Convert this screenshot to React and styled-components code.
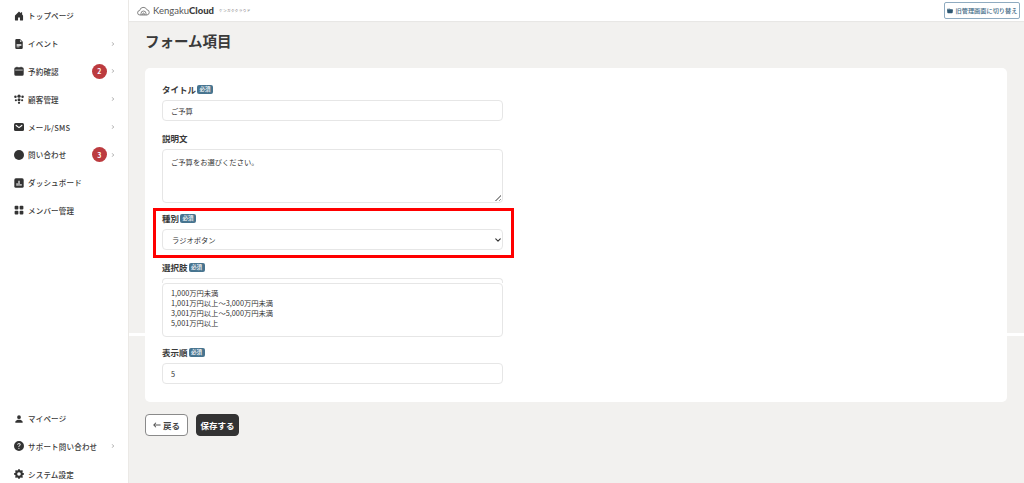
import styled, { createGlobalStyle } from 'styled-components';
import {
  BsHouseDoorFill,
  BsFileEarmarkTextFill,
  BsCircleFill,
  BsGridFill,
  BsPersonFill,
  BsQuestionCircleFill,
  BsGearFill,
  BsChevronRight,
  BsArrowLeft,
  BsFolderFill,
} from 'react-icons/bs';

const GlobalStyle = createGlobalStyle`
  html, body {
    margin: 0;
    height: 100%;
    overflow: hidden;
    background: #fff;
    font-family: "Noto Sans CJK JP", "Noto Sans", sans-serif;
    color: #333;
  }
`;

const Page = styled.div`
  display: flex;
  width: 1024px;
  height: 483px;
  overflow: hidden;
`;

const Sidebar = styled.nav`
  flex: 0 0 129px;
  height: 488px;
  box-sizing: border-box;
  padding-top: 2px;
  background: #fff;
  border-right: 1px solid #ebe9e6;
  display: flex;
  flex-direction: column;
  justify-content: space-between;
`;

const NavGroup = styled.div`
  display: flex;
  flex-direction: column;
`;

const NavItem = styled.div`
  height: 27.8px;
  display: flex;
  align-items: center;
  padding: 0 13px 0 14px;
  font-size: 7.5px;
  font-weight: 500;
  letter-spacing: 0.2px;
  color: #3a3a3a;
  white-space: nowrap;

  svg.main {
    width: 10px;
    height: 10px;
    margin-right: 4px;
    color: #333;
    flex: none;
  }
`;

const NavLabel = styled.span`
  flex: 1;
`;

const Badge = styled.span`
  width: 15px;
  height: 15px;
  border-radius: 50%;
  background: #bc3b3f;
  color: #fff;
  font-size: 7px;
  font-weight: 700;
  display: flex;
  align-items: center;
  justify-content: center;
  margin-right: 4px;
`;

const Chevron = styled(BsChevronRight)`
  width: 4px;
  height: 4px;
  color: #777;
  stroke-width: 1px;
`;

const Main = styled.div`
  position: relative;
  flex: 1;
  min-width: 0;
  background: #f2f1ef;
  display: flex;
  flex-direction: column;
`;

/* white stitching band from the original long screenshot */
const Seam = styled.div`
  position: absolute;
  left: 0;
  right: 0;
  top: 333px;
  height: 3px;
  background: #fff;
`;

const TopBar = styled.header`
  height: 21px;
  background: #fff;
  box-shadow: 0 1px 1px rgba(0, 0, 0, 0.04);
  display: flex;
  align-items: center;
  justify-content: space-between;
  padding: 0 4px 0 8px;
`;

const Logo = styled.div`
  display: flex;
  align-items: center;
  font-family: "Lato", "Noto Sans", sans-serif;
  font-size: 9.5px;
  color: #555;

  svg {
    width: 13px;
    height: 10px;
    margin-right: 3px;
  }

  b {
    font-weight: 900;
    color: #3a3a3a;
  }
`;

const LogoKana = styled.span`
  margin-left: 5px;
  font-family: "Noto Sans CJK JP", sans-serif;
  font-size: 3.6px;
  letter-spacing: 0.4px;
  color: #777;
`;

const SwitchButton = styled.button`
  height: 17px;
  width: 76px;
  box-sizing: border-box;
  padding: 0;
  border: 1px solid #8fabc0;
  border-radius: 2px;
  background: #fff;
  color: #3f6a85;
  font-family: inherit;
  font-size: 6.2px;
  font-weight: 500;
  display: flex;
  align-items: center;
  justify-content: center;
  gap: 3px;
  white-space: nowrap;

  svg {
    width: 6px;
    height: 6px;
    color: #2f5873;
  }
`;

const Content = styled.main`
  position: relative;
  padding: 0 17px 0 16px;
`;

const Title = styled.h1`
  margin: 8px 0 16px;
  height: 23px;
  line-height: 23px;
  font-size: 14.5px;
  font-weight: 700;
  color: #3a3a3a;
`;

const Card = styled.section`
  position: relative;
  box-sizing: border-box;
  height: 334px;
  padding: 16px 17px 0;
  background: #fff;
  border-radius: 5px;
`;

const Field = styled.div`
  position: relative;
  width: 341px;
  margin-bottom: ${p => p.$gap ?? 12}px;
`;

const Label = styled.div`
  height: 11px;
  margin-bottom: 5px;
  display: flex;
  align-items: center;
  gap: 1px;
  font-size: 8.5px;
  font-weight: 700;
  color: #3a3a3a;
  line-height: 11px;
`;

const Required = styled.span`
  width: 16px;
  height: 9px;
  border-radius: 2px;
  background: #47748f;
  color: #fff;
  font-size: 5.5px;
  font-weight: 500;
  line-height: 9px;
  text-align: center;
`;

const controlStyle = `
  display: block;
  width: 100%;
  box-sizing: border-box;
  background-color: #fff;
  border: 1px solid #e6e6e6;
  border-radius: 4px;
  font-family: inherit;
  font-size: 7.3px;
  color: #333;
  outline: none;
`;

const Input = styled.input`
  ${controlStyle}
  height: 21px;
  padding: 0 8px;
`;

const Select = styled.select`
  ${controlStyle}
  height: 21px;
  padding: 0 9px;
  appearance: none;
  background-image: url("data:image/svg+xml,%3Csvg xmlns='http://www.w3.org/2000/svg' viewBox='0 0 16 16'%3E%3Cpath fill='none' stroke='%23333' stroke-width='3' stroke-linecap='round' stroke-linejoin='round' d='M2 5l6 6 6-6'/%3E%3C/svg%3E");
  background-repeat: no-repeat;
  background-position: right 1px center;
  background-size: 6px 6px;
`;

const TextArea = styled.textarea`
  ${controlStyle}
  height: 54px;
  padding: ${p => p.$top}px 8px 0;
  line-height: 10.3px;
  resize: ${p => p.$resize ? 'vertical' : 'none'};

  &::-webkit-resizer {
    background: linear-gradient(135deg, transparent 50%, #999 50%, #999 60%, transparent 60%, transparent 78%, #999 78%, #999 88%, transparent 88%) no-repeat right 1px bottom 1px / 6px 6px;
  }
`;

/* cut-off top of the input, part of the stitched capture */
const CutInput = styled.div`
  height: 5px;
  box-sizing: border-box;
  border: 1px solid #e6e6e6;
  border-bottom: 0;
  border-radius: 4px 4px 0 0;
`;

const Highlight = styled.div`
  position: absolute;
  left: -9px;
  right: -11px;
  top: -5px;
  bottom: -8px;
  border: 3px solid #f00;
  pointer-events: none;
`;

const Actions = styled.div`
  display: flex;
  gap: 8px;
  margin-top: 12px;
`;

const Button = styled.button`
  height: 22px;
  box-sizing: border-box;
  padding: 0;
  width: ${p => p.$width}px;
  border-radius: 4px;
  border: 1px solid ${p => p.$dark ? '#333' : '#8a8a8a'};
  background: ${p => p.$dark ? '#333' : '#fff'};
  color: ${p => p.$dark ? '#fff' : '#444'};
  font-family: inherit;
  font-size: 8.5px;
  font-weight: 700;
  display: flex;
  align-items: center;
  justify-content: center;
  gap: 2px;

  svg {
    width: 8px;
    height: 8px;
    stroke-width: 0.6px;
  }
`;

function CalendarSolid(props) {
  return (
    <svg viewBox="0 0 16 16" fill="currentColor" {...props}>
      <path d="M4 1h1.500v2H4zM10.500 1H12v2h-1.500z" />
      <path d="M3 2h10a2.500 2.500 0 0 1 2.500 2.500V13a2.500 2.500 0 0 1-2.500 2.500H3A2.500 2.500 0 0 1 .5 13V4.500A2.500 2.500 0 0 1 3 2z" />
      <path d="M2 6.500h12" stroke="#fff" strokeWidth="1.100" />
    </svg>
  );
}

function PeopleDots(props) {
  return (
    <svg viewBox="0 0 16 16" fill="currentColor" {...props}>
      <circle cx="8" cy="3.500" r="2.600" />
      <circle cx="2.300" cy="4.500" r="2" />
      <circle cx="13.700" cy="4.500" r="2" />
      <circle cx="8" cy="9.300" r="2.400" />
      <circle cx="3" cy="10" r="1.700" />
      <circle cx="13" cy="10" r="1.700" />
      <circle cx="8" cy="14" r="1.800" />
    </svg>
  );
}

function MailSolid(props) {
  return (
    <svg viewBox="0 0 16 16" fill="currentColor" {...props}>
      <rect x="0" y="1.500" width="16" height="13" rx="2.500" />
      <path d="M3.500 5.500 8 9l4.500-3.500" fill="none" stroke="#fff" strokeWidth="1.800" strokeLinecap="round" strokeLinejoin="round" />
    </svg>
  );
}

function ChartSolid(props) {
  return (
    <svg viewBox="0 0 16 16" fill="currentColor" {...props}>
      <rect x="0.500" y="0.500" width="15" height="15" rx="2.500" />
      <path d="M4 8.500h1.800V12.500H4zM7.100 4.500h1.800v8H7.100zM10.200 9.500H12v3h-1.800z" fill="#fff" />
    </svg>
  );
}

const topItems = [
  { icon: BsHouseDoorFill, label: 'トップページ' },
  { icon: BsFileEarmarkTextFill, label: 'イベント', more: true },
  { icon: CalendarSolid, label: '予約確認', badge: 2, more: true },
  { icon: PeopleDots, label: '顧客管理', more: true },
  { icon: MailSolid, label: 'メール/SMS', more: true },
  { icon: BsCircleFill, label: '問い合わせ', badge: 3, more: true },
  { icon: ChartSolid, label: 'ダッシュボード' },
  { icon: BsGridFill, label: 'メンバー管理' },
];

const bottomItems = [
  { icon: BsPersonFill, label: 'マイページ' },
  { icon: BsQuestionCircleFill, label: 'サポート問い合わせ', more: true },
  { icon: BsGearFill, label: 'システム設定' },
];

const Nav = ({ items }) => (
  <NavGroup>
    {items.map(({ icon: Icon, label, badge, more }) => (
      <NavItem key={label}>
        <Icon className="main" />
        <NavLabel>{label}</NavLabel>
        {badge && <Badge>{badge}</Badge>}
        {more && <Chevron />}
      </NavItem>
    ))}
  </NavGroup>
);

const FieldLabel = ({ children }) => (
  <Label>
    {children}
    <Required>必須</Required>
  </Label>
);

const App = () => (
  <Page>
    <GlobalStyle />
    <Sidebar>
      <Nav items={topItems} />
      <Nav items={bottomItems} />
    </Sidebar>
    <Main>
      <Seam />
      <TopBar>
        <Logo>
          <svg viewBox="0 0 26 20" fill="none" stroke="#666" strokeWidth="1.600">
            <path d="M6 18a4.500 4.500 0 0 1-.6-9A7.500 7.500 0 0 1 19.800 7.500 5.300 5.300 0 0 1 20 18z" />
            <path d="M8 18v-3a5 5 0 0 1 10 0v3M11.500 18v-2.500a1.500 1.500 0 0 1 3 0V18" />
          </svg>
          Kengaku<b>Cloud</b>
          <LogoKana>ケンガククラウド</LogoKana>
        </Logo>
        <SwitchButton>
          <BsFolderFill />
          旧管理画面に切り替え
        </SwitchButton>
      </TopBar>
      <Content>
        <Title>フォーム項目</Title>
        <Card>
          <Field $gap={12}>
            <FieldLabel>タイトル</FieldLabel>
            <Input defaultValue="ご予算" />
          </Field>
          <Field $gap={10}>
            <Label>説明文</Label>
            <TextArea $top={7} $resize defaultValue="ご予算をお選びください。" />
          </Field>
          <Field $gap={12}>
            <FieldLabel>種別</FieldLabel>
            <Select defaultValue="radio">
              <option value="radio">ラジオボタン</option>
            </Select>
            <Highlight />
          </Field>
          <Field $gap={10}>
            <FieldLabel>選択肢</FieldLabel>
            <CutInput />
            <TextArea
              $top={3.5}
              defaultValue={'1,000万円未満\n1,001万円以上～3,000万円未満\n3,001万円以上～5,000万円未満\n5,001万円以上'}
            />
          </Field>
          <Field>
            <FieldLabel>表示順</FieldLabel>
            <Input defaultValue="5" />
          </Field>
        </Card>
        <Actions>
          <Button $width={43}>
            <BsArrowLeft />
            戻る
          </Button>
          <Button $width={43} $dark>保存する</Button>
        </Actions>
      </Content>
    </Main>
  </Page>
);

export default App;
